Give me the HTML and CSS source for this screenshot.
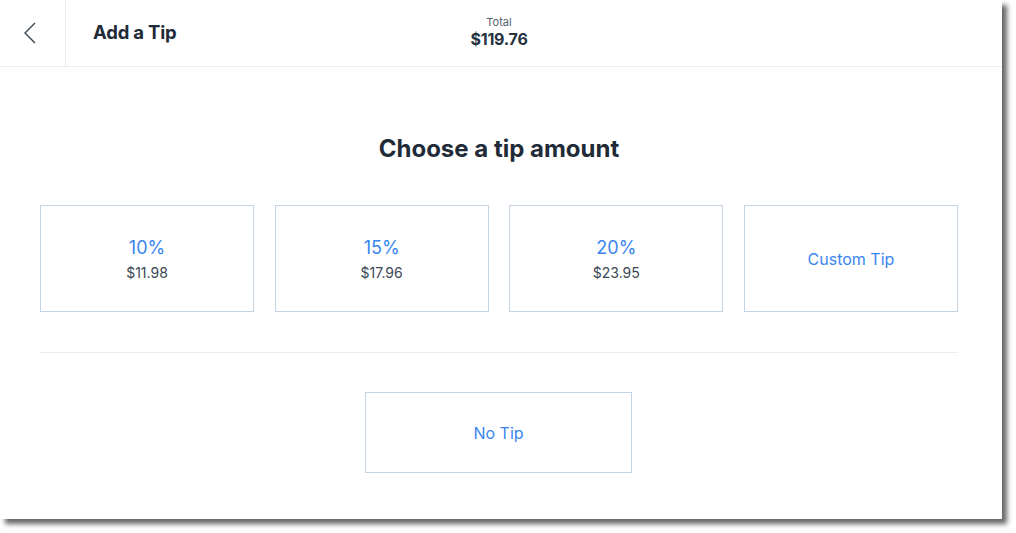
FILE: index.html
```html
<!DOCTYPE html>
<html>
<head>
<meta charset="utf-8">
<link rel="stylesheet" href="styles.css">
</head>
<body>
<div class="panel">
  <header class="header">
    <div class="back">
      <svg width="14" height="24" viewBox="0 0 14 24"><path d="M12 2 L2 12 L12 22" fill="none" stroke="#3a4350" stroke-width="1.4"/></svg>
    </div>
    <div class="title">Add a Tip</div>
    <div class="total">
      <div class="total-label">Total</div>
      <div class="total-value">$119.76</div>
    </div>
  </header>
  <main class="content">
    <h1 class="heading">Choose a tip amount</h1>
    <div class="options">
      <button class="card"><span class="pct">10%</span><span class="amt">$11.98</span></button>
      <button class="card"><span class="pct">15%</span><span class="amt">$17.96</span></button>
      <button class="card"><span class="pct">20%</span><span class="amt">$23.95</span></button>
      <button class="card"><span class="custom">Custom Tip</span></button>
    </div>
    <div class="divider"></div>
    <div class="notip-row">
      <button class="card notip"><span class="custom">No Tip</span></button>
    </div>
  </main>
</div>
</body>
</html>
```

FILE: styles.css
```css
html, body {
  margin: 0;
  padding: 0;
  background: #ffffff;
}
body {
  width: 1016px;
  height: 533px;
  overflow: hidden;
  font-family: "Inter", "Open Sans", sans-serif;
  color: #1e2c3b;
}
.panel {
  width: 1002px;
  height: 519px;
  background: #ffffff;
  box-shadow: 5px 5px 5px rgba(0, 0, 0, 0.6);
  position: relative;
}
.header {
  height: 66px;
  border-bottom: 1px solid #ececec;
  display: flex;
  align-items: center;
  position: relative;
}
.back {
  width: 66px;
  height: 66px;
  border-right: 1px solid #ececec;
  box-sizing: border-box;
  display: flex;
  align-items: center;
  padding-left: 23px;
}
.title {
  margin-left: 27px;
  font-size: 18.5px;
  font-weight: 700;
  letter-spacing: -0.2px;
  color: #1f2b38;
  padding-bottom: 2px;
}
.total {
  position: absolute;
  left: 0;
  right: 4px;
  top: 15px;
  text-align: center;
  pointer-events: none;
}
.total-label {
  font-size: 11px;
  color: #55606c;
  line-height: 14px;
}
.total-value {
  font-size: 16px;
  font-weight: 700;
  letter-spacing: -0.2px;
  color: #243241;
  line-height: 20px;
}
.content {
  padding: 0 44px 0 40px;
}
.heading {
  margin: 67px 0 0;
  text-align: center;
  font-size: 24px;
  line-height: 30px;
  font-weight: 700;
  color: #1f2b38;
  letter-spacing: 0;
}
.options {
  margin-top: 41px;
  display: grid;
  grid-template-columns: repeat(4, 214px);
  justify-content: space-between;
}
.card {
  height: 107px;
  border: 1px solid #c4d4e6;
  background: #fff;
  box-sizing: border-box;
  display: flex;
  flex-direction: column;
  align-items: center;
  justify-content: center;
  font-family: inherit;
  padding: 0;
  cursor: pointer;
}
.pct {
  font-size: 18px;
  line-height: 22px;
  color: #3a86f0;
  font-weight: 400;
  margin-top: 2px;
}
.amt {
  margin-top: 5px;
  font-size: 14px;
  line-height: 18px;
  color: #3a4756;
}
.custom {
  font-size: 16px;
  color: #3a86f0;
  font-weight: 400;
}
.divider {
  margin-top: 40px;
  height: 1px;
  background: #ededed;
}
.notip-row {
  margin-top: 39px;
  display: flex;
  justify-content: center;
  padding-right: 1px;
}
.notip {
  width: 267px;
  height: 81px;
}
```
